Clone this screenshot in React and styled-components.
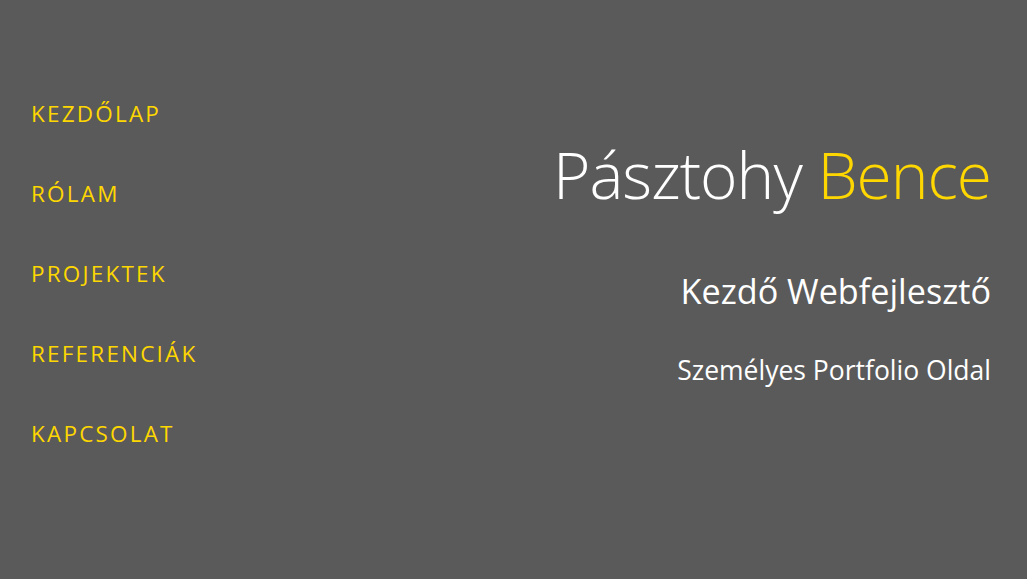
import React from "react";
import styled, { createGlobalStyle } from "styled-components";

const Global = createGlobalStyle`
  html, body { margin: 0; padding: 0; }
  body {
    background: #5a5a5a;
    font-family: "Open Sans", "Noto Sans", sans-serif;
  }
`;

const Page = styled.div`
  display: flex;
  justify-content: space-between;
  height: 579px;
  background: #5a5a5a;
`;

const Nav = styled.nav`
  display: flex;
  flex-direction: column;
  padding: 73px 0 0 31px;
`;

const NavLink = styled.a`
  display: flex;
  align-items: center;
  height: 80px;
  color: #ffd700;
  font-size: 22.5px;
  letter-spacing: 2.2px;
  text-transform: uppercase;
  text-decoration: none;
`;

const Hero = styled.header`
  display: flex;
  flex-direction: column;
  align-items: flex-end;
  padding: 130px 36px 0 0;
  color: #fff;
`;

const Title = styled.h1`
  margin: 0;
  font-size: 64px;
  font-weight: 300;
  line-height: 90px;
  letter-spacing: -1px;
`;

const Accent = styled.span`
  color: #ffd700;
`;

const Subtitle = styled.h2`
  margin: 48px 0 0;
  font-size: 34.2px;
  font-weight: 400;
  line-height: 46px;
`;

const Tagline = styled.p`
  margin: 38px 0 0;
  font-size: 26.5px;
  font-weight: 400;
  line-height: 36px;
`;

const links = ["Kezdőlap", "Rólam", "Projektek", "Referenciák", "Kapcsolat"];

export default function App() {
  return (
    <>
      <Global />
      <Page>
        <Nav>
          {links.map((l) => (
            <NavLink key={l} href="#">{l}</NavLink>
          ))}
        </Nav>
        <Hero>
          <Title>
            Pásztohy <Accent>Bence</Accent>
          </Title>
          <Subtitle>Kezdő Webfejlesztő</Subtitle>
          <Tagline>Személyes Portfolio Oldal</Tagline>
        </Hero>
      </Page>
    </>
  );
}
